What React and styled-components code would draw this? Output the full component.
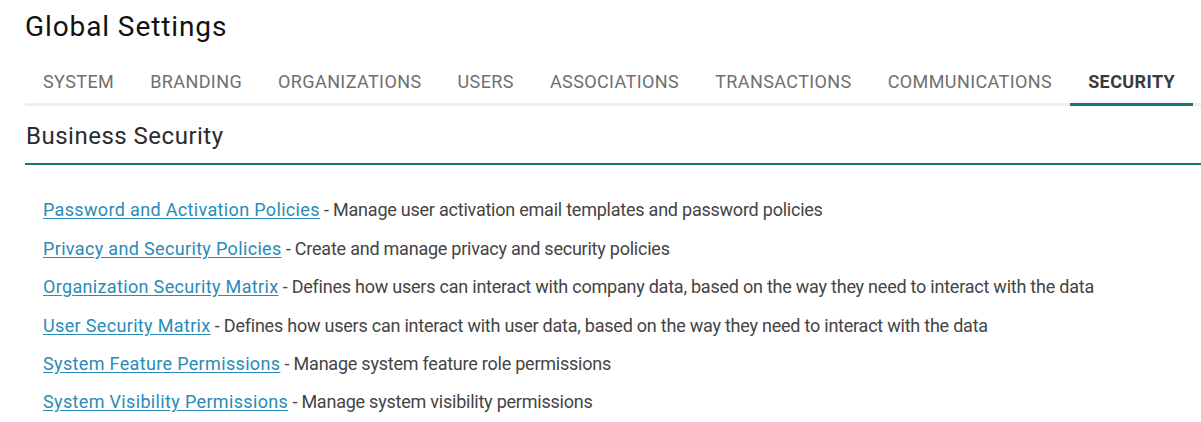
import React, { useState } from 'react';
import styled, { createGlobalStyle } from 'styled-components';

const GlobalStyle = createGlobalStyle`
  body {
    margin: 0;
    background: #fff;
    font-family: Roboto, "Liberation Sans", Arial, sans-serif;
  }
`;

const Page = styled.div`
  padding-left: 25px;
`;

const Title = styled.h1`
  margin: 10px 0 0;
  font-size: 28px;
  font-weight: 400;
  line-height: normal;
  letter-spacing: 0.9px;
  color: #111;
`;

const TabBar = styled.div`
  display: flex;
  margin-top: 16px;
  box-shadow: inset 0 -3px 0 #eeeeee;
`;

const Tab = styled.button`
  padding: 12px 18px 11px;
  border: none;
  border-bottom: 3px solid ${props => (props.active ? '#177a72' : 'transparent')};
  background: none;
  font-family: inherit;
  font-size: 18px;
  line-height: normal;
  letter-spacing: 0.4px;
  font-weight: ${props => (props.active ? 700 : 400)};
  color: ${props => (props.active ? '#3a3a3a' : '#6f6f6f')};
  cursor: pointer;
`;

const SectionHeader = styled.h2`
  margin: 16px 0 0;
  padding: 0 0 13px 1px;
  border-bottom: 2px solid #177a72;
  font-size: 24px;
  font-weight: 400;
  line-height: normal;
  letter-spacing: 0.5px;
  color: #2b2b2b;
`;

const List = styled.ul`
  list-style: none;
  margin: 0;
  padding: 25.7px 0 0 18px;
`;

const Item = styled.li`
  padding: 5.7px 0;
  font-size: 18px;
  line-height: 27px;
  color: #444;
`;

const Link = styled.a`
  color: #2a8bb7;
  letter-spacing: 0.34px;
  text-decoration: underline;
  text-underline-offset: 2px;
`;

const Desc = styled.span`
  letter-spacing: -0.23px;
`;

const tabs = [
  'SYSTEM',
  'BRANDING',
  'ORGANIZATIONS',
  'USERS',
  'ASSOCIATIONS',
  'TRANSACTIONS',
  'COMMUNICATIONS',
  'SECURITY',
];

const items = [
  ['Password and Activation Policies', 'Manage user activation email templates and password policies'],
  ['Privacy and Security Policies', 'Create and manage privacy and security policies'],
  ['Organization Security Matrix', 'Defines how users can interact with company data, based on the way they need to interact with the data'],
  ['User Security Matrix', 'Defines how users can interact with user data, based on the way they need to interact with the data'],
  ['System Feature Permissions', 'Manage system feature role permissions'],
  ['System Visibility Permissions', 'Manage system visibility permissions'],
];

const App = () => {
  const [activeTab, setActiveTab] = useState('SECURITY');

  return (
    <Page>
      <GlobalStyle />
      <Title>Global Settings</Title>
      <TabBar>
        {tabs.map(tab => (
          <Tab key={tab} active={tab === activeTab} onClick={() => setActiveTab(tab)}>
            {tab}
          </Tab>
        ))}
      </TabBar>
      <SectionHeader>Business Security</SectionHeader>
      <List>
        {items.map(([label, desc]) => (
          <Item key={label}>
            <Link href="#">{label}</Link>
            <Desc> - {desc}</Desc>
          </Item>
        ))}
      </List>
    </Page>
  );
};

export default App;
